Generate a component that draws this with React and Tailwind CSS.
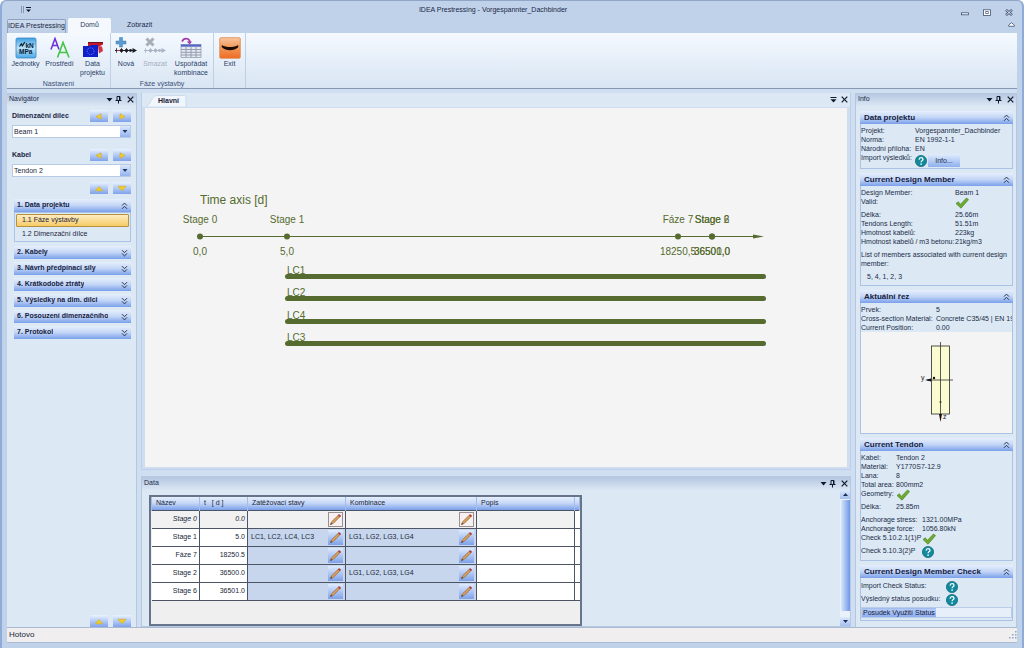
import React from "react";

const barFill = "bg-linear-to-b from-[#e6effc] via-[#c3d5f6] to-[#7a9fe9]";

function PinIcon() {
  return (
    <svg width="7" height="9" viewBox="0 0 7 9" fill="none" stroke="#10182c" aria-hidden="true">
      <path d="M2 5.5V1.5H5V5.5M0.5 5.5H6.5M3.5 5.5V8.5" />
      <path d="M4.5 1.5V5.5" />
    </svg>
  );
}

function CloseIcon() {
  return (
    <svg width="7" height="7" viewBox="0 0 7 7" fill="none" stroke="#10182c" strokeWidth="1.2" aria-hidden="true">
      <path d="M0.7 0.7L6.3 6.3M6.3 0.7L0.7 6.3" />
    </svg>
  );
}

function CaretIcon() {
  return (
    <svg width="7" height="4" viewBox="0 0 7 4" fill="#10182c" aria-hidden="true">
      <path d="M0.5 0H6.5L3.5 3.5Z" />
    </svg>
  );
}

function PanelTools() {
  return (
    <span className="flex items-center gap-0.5">
      <button type="button" aria-label="Menu"><CaretIcon /></button>
      <button type="button" aria-label="Pin"><PinIcon /></button>
      <button type="button" aria-label="Close" className="pl-[3px]"><CloseIcon /></button>
    </span>
  );
}

function PanelTitle({ children }) {
  return (
    <div className="flex h-[13px] items-center justify-between bg-linear-to-b from-[#b4c6df] to-[#dae6f4] px-0.5 text-[7px] text-[#1c2a48]">
      <span>{children}</span>
      <PanelTools />
    </div>
  );
}

function Chevrons({ up }) {
  return (
    <svg width="7" height="8" viewBox="0 0 7 8" fill="none" stroke="#26334f" aria-hidden="true">
      {up ? (
        <path d="M1 3.6L3.5 1.1L6 3.6M1 6.8L3.5 4.3L6 6.8" />
      ) : (
        <path d="M1 1.2L3.5 3.7L6 1.2M1 4.4L3.5 6.9L6 4.4" />
      )}
    </svg>
  );
}

const arrowPaths = {
  left: "M2 3.5L7 0.7V6.3Z",
  right: "M8 3.5L3 0.7V6.3Z",
  up: "M1.2 5.8L5 1.5L8.8 5.8Z",
  down: "M0.8 1.2H9.2L5 5.8Z",
};

function ArrowButton({ dir, label }) {
  return (
    <button
      type="button"
      aria-label={label}
      className="flex h-3 w-[18px] items-center justify-center bg-linear-to-b from-[#eaf2fe] to-[#7fa2ea]"
    >
      <svg width="10" height="7" viewBox="0 0 10 7" aria-hidden="true">
        <path d={arrowPaths[dir]} fill="#f2cf1d" stroke="#cda63e" strokeWidth="0.6" />
      </svg>
    </button>
  );
}

function Picker({ id, label, value }) {
  return (
    <div className="flex flex-col gap-[3px]">
      <div className="flex items-center justify-between">
        <label htmlFor={id} className="text-[7px] font-bold text-[#1b2744]">{label}</label>
        <span className="flex gap-[5px]">
          <ArrowButton dir="left" label={label + " previous"} />
          <ArrowButton dir="right" label={label + " next"} />
        </span>
      </div>
      <div className="relative">
        <select
          id={id}
          defaultValue={value}
          className="block h-[13px] w-full appearance-none border border-[#b8cae4] bg-white pl-px text-[7px] leading-[11px] text-[#20283a]"
        >
          <option>{value}</option>
        </select>
        <span className="pointer-events-none absolute inset-y-px right-px flex w-[10px] items-center justify-center bg-linear-to-b from-[#dce8fb] to-[#93b2ee]">
          <svg width="6" height="3" viewBox="0 0 6 3" fill="#1d3564" aria-hidden="true"><path d="M0.5 0H5.5L3 3Z" /></svg>
        </span>
      </div>
    </div>
  );
}

function NavHeader({ children, up }) {
  return (
    <button
      type="button"
      className={"flex h-[13px] w-full items-center justify-between gap-1 pl-[3px] pr-[3px] text-[7px] font-bold text-[#14213f] " + barFill}
    >
      <span className="overflow-hidden whitespace-nowrap">{children}</span>
      <span className="shrink-0"><Chevrons up={up} /></span>
    </button>
  );
}

const navSections = [
  "2. Kabely",
  "3. Návrh předpínací síly",
  "4. Krátkodobé ztráty",
  "5. Výsledky na dim. dílci",
  "6. Posouzení dimenzačního",
  "7. Protokol",
];

function Navigator() {
  return (
    <aside className="flex flex-col border-r border-[#b3c7e2] bg-[#dce8f4]">
      <PanelTitle>Navigátor</PanelTitle>
      <div className="flex flex-1 flex-col px-[5px] pt-1">
        <div className="flex flex-col gap-[11px]">
          <Picker id="member" label="Dimenzační dílec" value="Beam 1" />
          <Picker id="tendon" label="Kabel" value="Tendon 2" />
        </div>
        <div className="flex justify-end gap-[5px] pt-[5px]">
          <ArrowButton dir="up" label="Move up" />
          <ArrowButton dir="down" label="Move down" />
        </div>
        <nav className="flex flex-col gap-[3px] pl-0.5 pt-[5px]">
          <div className="pb-px">
            <NavHeader up>1. Data projektu</NavHeader>
            <div className="flex flex-col gap-px border border-[#a9c2e6] p-px text-[7px] text-[#1c2640]">
              <a href="#stages" className="flex h-[13px] items-center rounded-[1px] border border-[#b39242] bg-linear-to-b from-[#fdecc0] to-[#f7cb63] pl-[5px]">1.1 Fáze výstavby</a>
              <a href="#members" className="flex h-3 items-center pl-1.5">1.2 Dimenzační dílce</a>
            </div>
          </div>
          {navSections.map((s) => (
            <NavHeader key={s}>{s}</NavHeader>
          ))}
        </nav>
        <div className="mt-auto flex justify-end gap-[5px]">
          <ArrowButton dir="up" label="Scroll up" />
          <ArrowButton dir="down" label="Scroll down" />
        </div>
      </div>
    </aside>
  );
}

function UnitsIcon() {
  return (
    <svg width="22" height="22" viewBox="0 0 22 22" aria-hidden="true">
      <defs>
        <linearGradient id="units" x1="0" y1="0" x2="0" y2="1">
          <stop offset="0" stopColor="#3f9fe0" />
          <stop offset="0.5" stopColor="#b9e2f8" />
          <stop offset="1" stopColor="#4aa8e6" />
        </linearGradient>
      </defs>
      <rect x="1" y="1" width="20" height="20" rx="1.5" fill="url(#units)" stroke="#3a86c4" strokeWidth="0.8" />
      <path d="M4.5 9.5L6.3 6.8L7.4 8.8L9.8 5" fill="none" stroke="#0b1c33" strokeWidth="1.2" />
      <text x="10.5" y="11" fontSize="6.5" fontWeight="bold" fontFamily="Liberation Sans, sans-serif" fill="#0b1c33">kN</text>
      <text x="4" y="17" fontSize="6.5" fontWeight="bold" fontFamily="Liberation Sans, sans-serif" fill="#0b1c33">MPa</text>
    </svg>
  );
}

function LettersIcon() {
  return (
    <svg width="22" height="22" viewBox="0 0 22 22" fill="none" aria-hidden="true">
      <path d="M2 12.5L6 1.5L10 12.5M3.5 8.5H8.6" stroke="#6a2fd8" strokeWidth="1.5" />
      <path d="M8.5 20.5L14 5.5L20 20.5M10.5 15.5H17.8" stroke="#43c443" strokeWidth="1.6" />
    </svg>
  );
}

function ProjectIcon() {
  return (
    <svg width="22" height="22" viewBox="0 0 22 22" aria-hidden="true">
      <path d="M6 5H21V7.5L18 9H6Z" fill="#c5182a" />
      <path d="M6 5H21V6H6Z" fill="#6b1220" />
      <path d="M16 9L20 9.5L21 14L17 16.5Z" fill="#cf3546" />
      <path d="M1 9H8L9 8H16V20H1Z" fill="#1020c8" />
      <circle cx="8.6" cy="14.2" r="3.4" fill="none" stroke="#8f8ff0" strokeWidth="0.9" strokeDasharray="0.9 1" />
    </svg>
  );
}

function StageIcon({ remove }) {
  const line = remove ? "#a9b4c4" : "#1d1d26";
  return (
    <svg width="22" height="22" viewBox="0 0 22 22" aria-hidden="true">
      {remove ? (
        <path d="M2.5 1.5L9.5 8.5M9.5 1.5L2.5 8.5" stroke="#a7adb7" strokeWidth="3" />
      ) : (
        <path d="M4.5 0.5H7.5V4H11V7H7.5V10H4.5V7H1V4H4.5Z" fill="#5b9bd0" stroke="#3b7fb5" strokeWidth="0.5" />
      )}
      <path d="M0 13.5H21" stroke={line} strokeWidth="1" />
      {!remove && <path d="M1 13.5H6" stroke="#b02a2a" strokeWidth="1" />}
      <path d="M1.5 11.2V15.8M6.5 11.2V15.8M11.5 11.2V15.8" stroke={line} strokeWidth="0.8" />
      <circle cx="6.5" cy="13.5" r="1.7" fill={line} />
      <circle cx="11.5" cy="13.5" r="1.7" fill={line} />
      <circle cx="15.5" cy="13.5" r="1.4" fill={line} />
      <path d="M17.5 11L22 13.5L17.5 16Z" fill={line} />
    </svg>
  );
}

function SortIcon() {
  return (
    <svg width="24" height="22" viewBox="0 0 24 22" aria-hidden="true">
      <path d="M3 4.5Q5 0.5 9 2Q11 3 11 6" fill="none" stroke="#a23aa8" strokeWidth="1.8" />
      <path d="M7.8 4.5H13L10.6 7.5Z" fill="#a23aa8" />
      <rect x="2" y="7.5" width="20" height="13" fill="#e4e8ef" stroke="#98a1b4" strokeWidth="0.8" />
      <rect x="2" y="7.5" width="20" height="2.2" fill="#5264c8" />
      <path d="M2 12.5H22M2 15.3H22M2 18H22M7 9V20.5M12 9V20.5M17 9V20.5" stroke="#8d97ab" strokeWidth="0.9" />
    </svg>
  );
}

function ExitIcon() {
  return (
    <svg width="22" height="22" viewBox="0 0 22 22" aria-hidden="true">
      <defs>
        <linearGradient id="exit" x1="0" y1="0" x2="0" y2="1">
          <stop offset="0" stopColor="#f9c59e" />
          <stop offset="0.45" stopColor="#f19a5c" />
          <stop offset="1" stopColor="#ee6b22" />
        </linearGradient>
      </defs>
      <rect x="0.7" y="0.7" width="20.6" height="20.6" rx="1.2" fill="url(#exit)" stroke="#dd8a52" strokeWidth="0.8" />
      <path d="M2.8 8C7 10.8 15 10.8 19.2 8V10.2C15 14.2 7 14.2 2.8 10.2Z" fill="#1c0d06" />
    </svg>
  );
}

function RibbonButton({ icon, children, width, disabled }) {
  return (
    <button
      type="button"
      disabled={disabled}
      className={"flex flex-col items-center text-center text-[7px] leading-[9px] " + width + (disabled ? " text-[#a3aebf]" : " text-[#2b3d66]")}
    >
      {icon}
      <span>{children}</span>
    </button>
  );
}

function RibbonGroup({ name, children, width }) {
  return (
    <div className={"flex flex-col justify-between border-r border-[#bfd0e6] pt-1 " + width}>
      <div className="flex justify-center">{children}</div>
      <div className="h-[9px] text-center text-[7px] leading-[9px] text-[#3c4f78]">{name}</div>
    </div>
  );
}

function TitleArea() {
  return (
    <header className="text-[7px] text-[#1a2846]">
      <div className="flex h-[18px] items-center">
        <span className="flex flex-1 items-center pl-3.5">
          <svg width="10" height="7" viewBox="0 0 10 7" aria-hidden="true">
            <path d="M0.5 0V7M2.5 0V7" stroke="#8297b8" />
            <path d="M5 1.5H10" stroke="#10182c" />
            <path d="M5 3.5H10L7.5 6Z" fill="#10182c" />
          </svg>
        </span>
        <h1 className="whitespace-nowrap pt-0.5 text-center">IDEA Prestressing - Vorgespannter_Dachbinder</h1>
        <span className="flex flex-1 justify-end gap-3.5 pl-12 pr-1 pt-1.5">
          <button type="button" aria-label="Minimize">
            <svg width="8" height="7" viewBox="0 0 8 7" fill="#fff" stroke="#3f5273" strokeWidth="0.8"><rect x="0.5" y="3.8" width="7" height="2" /></svg>
          </button>
          <button type="button" aria-label="Maximize">
            <svg width="8" height="7" viewBox="0 0 8 7" fill="#fff" stroke="#3f5273" strokeWidth="0.8"><rect x="0.5" y="0.8" width="7" height="5.600" /><rect x="2.8" y="2.6" width="2.4" height="1.8" /></svg>
          </button>
          <button type="button" aria-label="Close window">
            <svg width="8" height="7" viewBox="0 0 8 7" fill="none"><path d="M1 0.8L7 6.2M7 0.8L1 6.2" stroke="#3f5273" strokeWidth="2.4" /><path d="M1.2 1L6.8 6M6.8 1L1.2 6" stroke="#fff" strokeWidth="0.9" /></svg>
          </button>
        </span>
        <span className="hidden" />
      </div>
      <div className="flex h-[15px] items-end">
        <button type="button" className="flex h-3.5 w-[59px] items-center justify-center whitespace-nowrap rounded-t-xs border border-b-0 border-[#8da3c4] bg-linear-to-b from-[#cfdcee] to-[#bccde6]">IDEA Prestressing</button>
        <button type="button" className="ml-0.5 flex h-[15px] w-[43px] items-center justify-center rounded-t-xs bg-[#f5f9fe] text-[#2b3b60]">Domů</button>
        <button type="button" className="ml-4 flex h-[15px] items-center">Zobrazit</button>
        <button type="button" aria-label="Collapse ribbon" className="mb-1.5 ml-auto mr-0.5">
          <svg width="7" height="5" viewBox="0 0 7 5" fill="#fff" stroke="#3f5273" strokeWidth="0.8"><path d="M0.7 4.3V3L3.5 0.7L6.3 3V4.3Z" /></svg>
        </button>
      </div>
    </header>
  );
}

function Ribbon() {
  return (
    <div className="flex h-14 border-b border-[#8798b3] bg-linear-to-b from-[#f4f9fe] via-[#e6eff9] to-[#d9e5f3]">
      <RibbonGroup name="Nastavení" width="w-[104px]">
        <RibbonButton icon={<UnitsIcon />} width="w-[34px]">Jednotky</RibbonButton>
        <RibbonButton icon={<LettersIcon />} width="w-[34px]">Prostředí</RibbonButton>
        <RibbonButton icon={<ProjectIcon />} width="w-[32px]">Data<br />projektu</RibbonButton>
      </RibbonGroup>
      <RibbonGroup name="Fáze výstavby" width="w-[103px]">
        <RibbonButton icon={<StageIcon />} width="w-[26px]">Nová</RibbonButton>
        <RibbonButton icon={<StageIcon remove />} width="w-[32px]" disabled>Smazat</RibbonButton>
        <RibbonButton icon={<SortIcon />} width="w-[40px]">Uspořádat<br />kombinace</RibbonButton>
      </RibbonGroup>
      <RibbonGroup name="" width="w-8">
        <RibbonButton icon={<ExitIcon />} width="w-[28px]">Exit</RibbonButton>
      </RibbonGroup>
    </div>
  );
}

const loadCases = [
  { name: "LC1", y: 169 },
  { name: "LC2", y: 191 },
  { name: "LC4", y: 214 },
  { name: "LC3", y: 236 },
];

const stagePoints = [
  { name: "Stage 0", time: "0,0", x: 55 },
  { name: "Stage 1", time: "5,0", x: 142 },
  { name: "Fáze 7", time: "18250,5", x: 533 },
  { name: "Stage 2", time: "36500,0", x: 567 },
  { name: "Stage 6", time: "36501,0", x: 567 },
];

function TimeAxis() {
  return (
    <svg className="h-full w-full" fill="#556b2f" fontFamily="Liberation Sans, Arial, sans-serif" fontSize="10" role="img" aria-label="Time axis">
      <text x="55" y="96" fontSize="12">Time axis [d]</text>
      <path d="M55 128.5H612" stroke="#556b2f" />
      <path d="M608 126.5L619 128.5L608 130.5Z" />
      {stagePoints.map((p) => (
        <g key={p.name} textAnchor="middle">
          <text x={p.x} y="115">{p.name}</text>
          <circle cx={p.x} cy="128.5" r="3" />
          <text x={p.x} y="147">{p.time}</text>
        </g>
      ))}
      {loadCases.map((c) => (
        <g key={c.name}>
          <text x="142" y={c.y - 3}>{c.name}</text>
          <path d={`M142.5 ${c.y - 0.5}H618.5`} stroke="#556b2f" strokeWidth="5" strokeLinecap="round" />
        </g>
      ))}
    </svg>
  );
}

function MainPanel() {
  return (
    <section className="flex flex-1 flex-col border border-t-0 border-[#bccfe8] bg-[#cfddf1]">
      <div className="flex h-3.5 items-end justify-between bg-[#dce8f4] pr-0.5">
        <button type="button" className="relative ml-1 flex h-3 items-center text-[7px] font-bold text-[#1a2236]">
          <svg width="41" height="12" viewBox="0 0 41 12" aria-hidden="true"><path d="M0 12Q4 9 6 4Q7.5 0.5 11 0.5H38.5Q40 0.5 40 2V12Z" fill="#f1f6fd" stroke="#c6d6eb" strokeWidth="0.8" /></svg>
          <span className="absolute left-3">Hlavní</span>
        </button>
        <span className="flex items-center gap-1 pb-1">
          <button type="button" aria-label="Window list">
            <svg width="7" height="7" viewBox="0 0 7 7" aria-hidden="true"><path d="M0.5 1.5H6.5" stroke="#10182c" /><path d="M0.5 3.2H6.5L3.5 6.5Z" fill="#10182c" /></svg>
          </button>
          <button type="button" aria-label="Close tab"><CloseIcon /></button>
        </span>
      </div>
      <div className="mx-[3px] mb-0.5 mt-px flex-1 overflow-hidden bg-[#f4f4f4]">
        <TimeAxis />
      </div>
    </section>
  );
}

function PencilIcon() {
  return (
    <svg width="13" height="13" viewBox="0 0 13 13" aria-hidden="true">
      <path d="M1.5 11.5L2.6 8.8L9.8 1.8L11.4 3.2L4.2 10.4Z" fill="#dfa35c" stroke="#8a5a34" strokeWidth="0.7" />
      <path d="M9 2.6L10.4 1.2L12 2.7L10.6 4.1Z" fill="#b33b3f" />
      <path d="M1.3 11.7L2 9.9L3.1 11Z" fill="#3b2b28" />
    </svg>
  );
}

const stageRows = [
  { name: "Stage 0", t: "0.0", lc: "", lg: "", locked: true },
  { name: "Stage 1", t: "5.0", lc: "LC1, LC2, LC4, LC3", lg: "LG1, LG2, LG3, LG4" },
  { name: "Fáze 7", t: "18250.5", lc: "", lg: "" },
  { name: "Stage 2", t: "36500.0", lc: "", lg: "LG1, LG2, LG3, LG4" },
  { name: "Stage 6", t: "36501.0", lc: "", lg: "" },
];

function EditCell({ value, label, locked }) {
  return (
    <td className={"border border-[#4c5566] p-0 " + (locked ? "bg-[#f1f1f1]" : "bg-[#c7d6ed]")}>
      <div className="flex items-center justify-between pl-[3px] pr-0.5">
        <span>{value}</span>
        <button
          type="button"
          aria-label={label}
          disabled={locked}
          className={"flex h-[15px] w-[15px] items-center justify-center " + (locked ? "border border-[#9a8f95] bg-[#f6f1f0]" : "bg-linear-to-b from-[#dfeafc] to-[#7ea2ea]")}
        >
          <PencilIcon />
        </button>
      </div>
    </td>
  );
}

function StageTable() {
  const head = "border-x border-[#a5bce4] p-0 pl-1 text-left font-normal";
  return (
    <div className="w-[433px] border-2 border-[#66758a] bg-[#efefef]">
      <table className="w-full table-fixed border-collapse text-[7px] text-[#20283a]">
        <colgroup>
          <col className="w-[48px]" />
          <col className="w-[48px]" />
          <col className="w-[98px]" />
          <col className="w-[131px]" />
          <col className="w-[98px]" />
          <col />
        </colgroup>
        <thead>
          <tr className={"h-[13px] " + barFill}>
            <th className={head}>Název</th>
            <th className={head + " whitespace-pre"}>t   [ d ]</th>
            <th className={head}>Zatěžovací stavy</th>
            <th className={head}>Kombinace</th>
            <th className={head}>Popis</th>
            <th className={head} aria-label="Filler" />
          </tr>
        </thead>
        <tbody>
          {stageRows.map((r) => (
            <tr key={r.name} className={"h-[18px] " + (r.locked ? "bg-[#f1f1f1] italic" : "bg-white")}>
              <td className="border border-l-0 border-[#4c5566] p-0 pr-0.5 text-right">{r.name}</td>
              <td className="border border-[#4c5566] p-0 pr-0.5 text-right">{r.t}</td>
              <EditCell value={r.lc} locked={r.locked} label={"Edit load cases of " + r.name} />
              <EditCell value={r.lg} locked={r.locked} label={"Edit combinations of " + r.name} />
              <td className="border border-[#4c5566] p-0">
                <input aria-label={"Description of " + r.name} disabled={r.locked} className="block h-4 w-full bg-transparent px-1" />
              </td>
              <td className="border border-r-0 border-[#4c5566] bg-white p-0" />
            </tr>
          ))}
        </tbody>
      </table>
    </div>
  );
}

function ScrollButton({ up }) {
  return (
    <button type="button" aria-label={up ? "Scroll data up" : "Scroll data down"} className="flex h-[9px] w-[10px] items-center justify-center bg-linear-to-b from-[#dde9fb] to-[#a3bff0]">
      <svg width="5" height="3" viewBox="0 0 5 3" fill="#1d2f57" aria-hidden="true"><path d={up ? "M0 3H5L2.5 0Z" : "M0 0H5L2.5 3Z"} /></svg>
    </button>
  );
}

function DataPanel() {
  return (
    <section className="flex h-[151px] shrink-0 flex-col border border-[#b7c9e2] bg-[#dce8f4]">
      <PanelTitle>Data</PanelTitle>
      <div className="flex flex-1 items-stretch justify-between pl-[7px]">
        <div className="flex pt-[5px]">
          <StageTable />
        </div>
        <div className="flex flex-col items-center gap-px bg-[#e9f1fa]">
          <ScrollButton up />
          <div className="w-[9px] flex-1 bg-linear-to-r from-[#dbe7fa] to-[#6f97e8]" />
          <div className="h-1" />
          <ScrollButton />
        </div>
      </div>
    </section>
  );
}

function CheckIcon() {
  return (
    <svg width="14" height="12" viewBox="0 0 14 12" aria-hidden="true">
      <path d="M1 6.5L3.2 4.8L5.6 7.2L11.5 1L13.5 2.6L6 11.2Z" fill="#6cab2f" stroke="#4c8420" strokeWidth="0.7" />
    </svg>
  );
}

function HelpIcon() {
  return (
    <svg width="12" height="12" viewBox="0 0 12 12" aria-hidden="true">
      <circle cx="6" cy="6" r="5.6" fill="#118a9e" stroke="#0b6376" strokeWidth="0.7" />
      <path d="M4.1 4.6Q4.2 2.7 6.1 2.7Q8 2.7 8 4.3Q8 5.2 7 5.8Q6.1 6.4 6.1 7.2" fill="none" stroke="#fff" strokeWidth="1.3" />
      <circle cx="6.1" cy="9" r="0.85" fill="#fff" />
    </svg>
  );
}

function InfoSection({ title, children }) {
  return (
    <section>
      <button type="button" className={"flex h-[13px] w-full items-center justify-between pl-1 pr-[3px] text-[8px] font-bold text-[#14213f] " + barFill}>
        <span>{title}</span>
        <Chevrons up />
      </button>
      <div className="overflow-hidden border border-t-0 border-[#a9c2e6] pt-0.5">{children}</div>
    </section>
  );
}

function Row({ label, children, cols, tall }) {
  return (
    <div className={"grid whitespace-nowrap leading-[9px] " + cols + (tall ? " h-[13px]" : " h-[9px]")}>
      <dt>{label}</dt>
      <dd>{children}</dd>
    </div>
  );
}

function SectionDrawing() {
  return (
    <svg className="block w-full" height="101" viewBox="0 0 151 101" role="img" aria-label="Cross-section">
      <rect x="70.5" y="14" width="18" height="68" fill="#fbfbd2" stroke="#2a2a20" strokeWidth="0.8" />
      <path d="M79.5 10V86" stroke="#333" strokeWidth="0.8" />
      <path d="M66 48H92" stroke="#333" strokeWidth="0.8" />
      <path d="M64 48L70 46.5V49.5Z" fill="#111" />
      <path d="M78 82H81L79.5 90Z" fill="#111" />
      <circle cx="73" cy="46" r="1.2" fill="#111" />
      <circle cx="79.5" cy="70" r="1" fill="#333" />
      <text x="60" y="48" fontSize="7" fontFamily="Liberation Sans, sans-serif" fill="#222">y</text>
      <text x="82" y="87" fontSize="7" fontFamily="Liberation Sans, sans-serif" fill="#222">z</text>
    </svg>
  );
}

function InfoPanel() {
  const project = "grid-cols-[54px_1fr]";
  const member = "grid-cols-[94px_1fr]";
  const section = "grid-cols-[75px_1fr]";
  const tendon = "grid-cols-[35px_1fr]";
  const checks = "grid-cols-[61px_1fr]";
  const status = "grid-cols-[85px_1fr]";
  return (
    <aside className="flex flex-col border-x border-[#b3c7e2] bg-[#dce8f4] text-[7px] text-[#202c48]">
      <PanelTitle>Info</PanelTitle>
      <div className="flex flex-col gap-1 pl-1 pr-[3px] pt-[5px]">
        <InfoSection title="Data projektu">
          <dl>
            <Row cols={project} label="Projekt:">Vorgespannter_Dachbinder</Row>
            <Row cols={project} label="Norma:">EN 1992-1-1</Row>
            <Row cols={project} label="Národní příloha:">EN</Row>
            <div className="grid h-[15px] grid-cols-[54px_1fr] whitespace-nowrap leading-[9px]">
              <dt>Import výsledků:</dt>
              <dd className="flex items-center gap-px">
                <HelpIcon />
                <button type="button" className="h-[13px] w-8 bg-linear-to-b from-[#e2ecfc] to-[#8fb0ee] text-center">Info...</button>
              </dd>
            </div>
          </dl>
        </InfoSection>
        <InfoSection title="Current Design Member">
          <dl>
            <Row cols={member} label="Design Member:">Beam 1</Row>
            <Row cols={member} label="Valid:" tall><CheckIcon /></Row>
            <Row cols={member} label="Délka:">25.66m</Row>
            <Row cols={member} label="Tendons Length:">51.51m</Row>
            <Row cols={member} label="Hmotnost kabelů:">223kg</Row>
            <Row cols={member} label="Hmotnost kabelů / m3 betonu:">21kg/m3</Row>
          </dl>
          <p className="pt-1 leading-[9px]">List of members associated with current design member:</p>
          <p className="px-1.5 py-1 leading-[9px]">5, 4, 1, 2, 3</p>
        </InfoSection>
        <InfoSection title="Aktuální řez">
          <dl>
            <Row cols={section} label="Prvek:">5</Row>
            <Row cols={section} label="Cross-section Material:">Concrete C35/45 | EN 19</Row>
            <Row cols={section} label="Current Position:">0.00</Row>
          </dl>
          <div className="bg-[#f4f4f4]"><SectionDrawing /></div>
        </InfoSection>
        <InfoSection title="Current Tendon">
          <dl>
            <Row cols={tendon} label="Kabel:">Tendon 2</Row>
            <Row cols={tendon} label="Materiál:">Y1770S7-12.9</Row>
            <Row cols={tendon} label="Lana:">8</Row>
            <Row cols={tendon} label="Total area:">800mm2</Row>
            <Row cols={tendon} label="Geometry:" tall><CheckIcon /></Row>
            <Row cols={tendon} label="Délka:">25.85m</Row>
          </dl>
          <dl className="pb-px pt-1">
            <Row cols={checks} label="Anchorage stress:">1321.00MPa</Row>
            <Row cols={checks} label="Anchorage force:">1056.80kN</Row>
            <Row cols={checks} label="Check 5.10.2.1(1)P" tall><CheckIcon /></Row>
            <Row cols={checks} label="Check 5.10.3(2)P" tall><HelpIcon /></Row>
          </dl>
        </InfoSection>
        <InfoSection title="Current Design Member Check">
          <dl className="pt-px">
            <Row cols={status} label="Import Check Status:" tall><HelpIcon /></Row>
            <Row cols={status} label="Výsledný status posudku:" tall><HelpIcon /></Row>
          </dl>
          <table className="mb-0.5 w-full border border-[#b9cde9] leading-[9px] text-[#14213f]">
            <thead>
              <tr>
                <th className="w-px bg-linear-to-b from-[#b9cdf2] to-[#8aabee] px-px font-normal">Posudek</th>
                <th className="w-px bg-linear-to-b from-[#b9cdf2] to-[#8aabee] px-px font-normal">Využití</th>
                <th className="w-px bg-linear-to-b from-[#b9cdf2] to-[#8aabee] px-px font-normal">Status</th>
                <th aria-label="Filler" className="bg-[#e6effa]" />
              </tr>
            </thead>
          </table>
        </InfoSection>
      </div>
    </aside>
  );
}

export default function App() {
  return (
    <div className="flex min-h-screen flex-col rounded-t-md border-x-2 border-[#8fabd8] bg-[#c0d2ea] px-[5px] pb-[5px] font-['Liberation_Sans',Arial,sans-serif] shadow-[inset_0_1px_0_#8fa6c8]">
      <TitleArea />
      <Ribbon />
      <main className="grid flex-1 grid-cols-[130px_1fr_162px] gap-1 bg-[#cfdef1] pt-1">
        <Navigator />
        <div className="flex flex-col gap-1.5">
          <MainPanel />
          <DataPanel />
        </div>
        <InfoPanel />
      </main>
      <footer className="flex h-4 items-center justify-between border-y border-[#a9bad2] bg-[#f0eeee] pl-0.5 text-[8px] text-[#20283a]">
        <span>Hotovo</span>
        <svg width="8" height="8" viewBox="0 0 8 8" fill="#8ea5c8" aria-hidden="true">
          <path d="M6 0H7.5V1.5H6ZM3 3H4.5V4.5H3ZM6 3H7.5V4.5H6ZM0 6H1.5V7.5H0ZM3 6H4.5V7.5H3ZM6 6H7.5V7.5H6Z" />
        </svg>
      </footer>
    </div>
  );
}
